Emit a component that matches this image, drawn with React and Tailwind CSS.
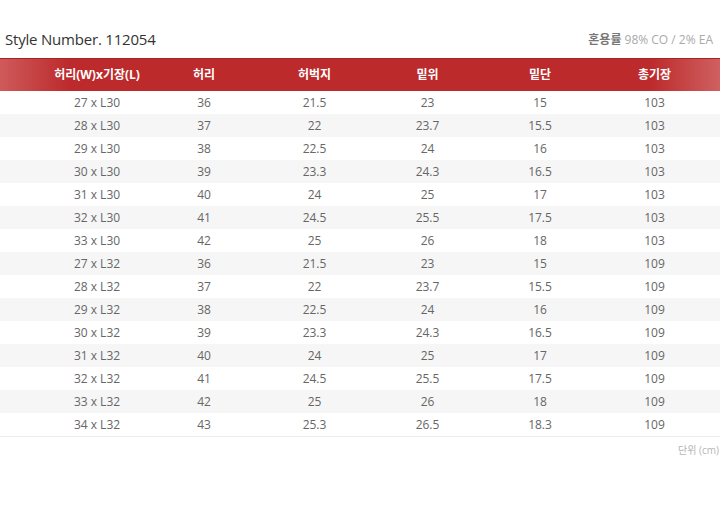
import React from 'react';

const headers = ['허리(W)x기장(L)', '허리', '허벅지', '밑위', '밑단', '총기장'];

const rows = [
  ['27 x L30', '36', '21.5', '23', '15', '103'],
  ['28 x L30', '37', '22', '23.7', '15.5', '103'],
  ['29 x L30', '38', '22.5', '24', '16', '103'],
  ['30 x L30', '39', '23.3', '24.3', '16.5', '103'],
  ['31 x L30', '40', '24', '25', '17', '103'],
  ['32 x L30', '41', '24.5', '25.5', '17.5', '103'],
  ['33 x L30', '42', '25', '26', '18', '103'],
  ['27 x L32', '36', '21.5', '23', '15', '109'],
  ['28 x L32', '37', '22', '23.7', '15.5', '109'],
  ['29 x L32', '38', '22.5', '24', '16', '109'],
  ['30 x L32', '39', '23.3', '24.3', '16.5', '109'],
  ['31 x L32', '40', '24', '25', '17', '109'],
  ['32 x L32', '41', '24.5', '25.5', '17.5', '109'],
  ['33 x L32', '42', '25', '26', '18', '109'],
  ['34 x L32', '43', '25.3', '26.5', '18.3', '109'],
];

// column tracks: first column carries left padding so its centre lands at ~97px
const grid = 'grid grid-cols-[150px_108px_113px_113px_112px_117px_1fr]';

export default function App() {
  return (
    <div
      className="w-[720px] h-[516px] bg-white"
      style={{ fontFamily: '"Open Sans", "Noto Sans CJK KR", sans-serif' }}
    >
      {/* Title line */}
      <div className="flex items-end justify-between h-[52px] pb-[3px] pl-[5px] pr-[7px]">
        <h1 className="text-[15px] leading-[20px] text-[#333] tracking-[-0.2px]">Style Number. 112054</h1>
        <p className="text-[12px] leading-[16px] mb-[1px]">
          <span className="font-bold text-[#777]">혼용률</span>
          <span className="text-[#aaa]"> 98% CO / 2% EA</span>
        </p>
      </div>

      {/* Header bar */}
      <div className="mt-[6px] h-[33px] border-t border-[#a82224] bg-[linear-gradient(90deg,#cf5a5a_0px,#bc2a2c_70px,#bc2a2c_650px,#d06060_720px)]">
        <div className={`${grid} h-full items-center text-[12px] font-bold text-white`}>
          {headers.map((h, i) => (
            <div key={h} className={`text-center ${i === 0 ? 'pl-[44px]' : ''}`}>{h}</div>
          ))}
        </div>
      </div>

      {/* Rows */}
      <div className="border-b border-[#ececec]">
        {rows.map((r, ri) => (
          <div
            key={ri}
            className={`${grid} h-[23px] items-center text-[12px] text-[#666] ${ri % 2 === 1 ? 'bg-[#f6f6f6]' : 'bg-white'}`}
          >
            {r.map((c, ci) => (
              <div key={ci} className={`text-center ${ci === 0 ? 'pl-[44px]' : ''}`}>{c}</div>
            ))}
          </div>
        ))}
      </div>

      <p className="mt-[6px] pr-[1px] text-right text-[10px] text-[#b5b5b5]">단위 (cm)</p>
    </div>
  );
}
